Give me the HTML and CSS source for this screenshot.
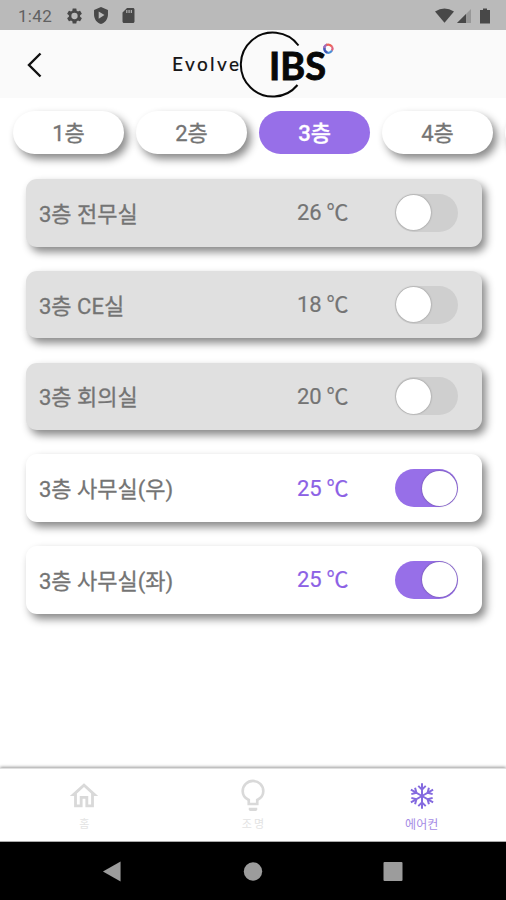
FILE: index.html
```html
<!DOCTYPE html>
<html lang="ko">
<head>
<meta charset="utf-8">
<meta name="viewport" content="width=device-width, initial-scale=1">
<title>Evolve IBS</title>
<link rel="stylesheet" href="styles.css">
</head>
<body>
<div class="phone">
  <div class="status">
    <span class="clock">1:42</span>
    <svg class="ic gear" viewBox="2 2 20 20"><path fill-rule="evenodd" d="M19.43 12.98c.04-.32.07-.64.07-.98s-.03-.66-.07-.98l2.11-1.65c.19-.15.24-.42.12-.64l-2-3.46c-.12-.22-.39-.3-.61-.22l-2.49 1c-.52-.4-1.08-.73-1.69-.98l-.38-2.65C14.46 2.18 14.25 2 14 2h-4c-.25 0-.46.18-.49.42l-.38 2.65c-.61.25-1.17.59-1.69.98l-2.49-1c-.23-.09-.49 0-.61.22l-2 3.46c-.13.22-.07.49.12.64l2.11 1.65c-.04.32-.07.65-.07.98s.03.66.07.98l-2.11 1.65c-.19.15-.24.42-.12.64l2 3.46c.12.22.39.3.61.22l2.49-1c.52.4 1.08.73 1.69.98l.38 2.65c.03.24.24.42.49.42h4c.25 0 .46-.18.49-.42l.38-2.65c.61-.25 1.17-.59 1.69-.98l2.49 1c.23.09.49 0 .61-.22l2-3.46c.12-.22.07-.49-.12-.64zM12 16.2a4.2 4.2 0 1 1 0-8.4 4.2 4.2 0 0 1 0 8.4z"/></svg>
    <svg class="ic shield" viewBox="3 1 18 22"><path fill-rule="evenodd" d="M12 1 3 5v6c0 5.55 3.84 10.74 9 12 5.16-1.26 9-6.45 9-12V5zM9 6.8v9.4l7.5-4.7z"/></svg>
    <svg class="ic card-ic" viewBox="4 2 16 20"><path fill-rule="evenodd" d="M18 2h-8L4 8v12c0 1.100.9 2 2 2h12c1.100 0 2-.9 2-2V4c0-1.100-.9-2-2-2zM9 8.500h1.500V4.500H9zM12 8.500h1.500V4.500H12zM15 8.500h1.500V4.500H15z"/></svg>
    <svg class="ic wifi" viewBox="0 0 20 15"><path d="M0 3.200Q10-3.200 20 3.200L10 15z"/></svg>
    <svg class="ic signal" viewBox="0 0 14 14"><path d="M14 0v14H0z" opacity=".3"/><path d="M9 5v9H0z"/></svg>
    <svg class="ic battery" viewBox="0 0 10 15"><path d="M3 0h4v1.500h3V15H0V1.500h3z"/></svg>
  </div>
  <header class="header">
    <svg class="back" viewBox="0 0 16 26"><path d="M13.500 1.500 2 13l11.500 11.500"/></svg>
    <svg class="logo" viewBox="0 0 170 68">
      <text class="evolve" x="2" y="40.500" textLength="67">Evolve</text>
      <path class="ring" d="M128.500 15.500A32 32 0 1 0 127.500 55"/>
      <text class="ibs" x="99" y="49.500" textLength="57" lengthAdjust="spacingAndGlyphs">IBS</text>
      <g class="dot">
        <path stroke="#5275cf" d="M154.800 19.500l-.6-3.200"/>
        <path stroke="#a46bb9" d="M154.200 18.500q0-3.200 3-3.900"/>
        <path stroke="#ec6258" d="M156.500 14.900q3.400-1.300 5.500 1.800"/>
        <path stroke="#df627f" d="M162 16.500q1.300 2.200-.2 4.200"/>
        <path stroke="#4b8fd6" d="M162 20.500q-2 3.200-5 2"/>
        <path stroke="#4058b5" d="M157.500 22.700q-3.300-1.200-3.200-4.500"/>
      </g>
    </svg>
  </header>
  <nav class="tabs">
    <div class="tab">1층</div>
    <div class="tab">2층</div>
    <div class="tab active">3층</div>
    <div class="tab">4층</div>
    <div class="tab"></div>
  </nav>
  <main class="rooms">
    <div class="room"><span class="name">3층 전무실</span><span class="temp">26 ℃</span><span class="switch"></span></div>
    <div class="room"><span class="name">3층 CE실</span><span class="temp">18 ℃</span><span class="switch"></span></div>
    <div class="room"><span class="name">3층 회의실</span><span class="temp">20 ℃</span><span class="switch"></span></div>
    <div class="room on"><span class="name">3층 사무실(우)</span><span class="temp">25 ℃</span><span class="switch"></span></div>
    <div class="room on"><span class="name">3층 사무실(좌)</span><span class="temp">25 ℃</span><span class="switch"></span></div>
  </main>
  <nav class="bottom">
    <div class="item">
      <svg viewBox="0 0 24 24"><path d="M12 5.690l5 4.500V18h-2v-6H9v6H7v-7.810l5-4.500M12 3 2 12h3v8h6v-6h2v6h6v-8h3L12 3z"/></svg>
      <span>홈</span>
    </div>
    <div class="item">
      <svg class="bulb" viewBox="0 0 24 32"><path class="line" d="M8 23.500v-3.800C4.500 18 2.300 15.200 2.300 11.500a9.700 9.700 0 0 1 19.400 0c0 3.700-2.200 6.500-5.700 8.200v3.800z"/><path d="M8 27h8v1.500q0 1.500-1.500 1.500h-5Q8 30 8 28.500z"/></svg>
      <span class="wide">조명</span>
    </div>
    <div class="item selected">
      <svg viewBox="0 0 24 24"><g class="flake"><path id="arm" d="M12 12V1M8.800 3.300 12 6.500l3.200-3.200"/><use href="#arm" transform="rotate(60 12 12)"/><use href="#arm" transform="rotate(120 12 12)"/><use href="#arm" transform="rotate(180 12 12)"/><use href="#arm" transform="rotate(240 12 12)"/><use href="#arm" transform="rotate(300 12 12)"/></g></svg>
      <span>에어컨</span>
    </div>
  </nav>
  <div class="system">
    <svg viewBox="0 0 20 22"><path d="M19 .5v21L.5 11z"/></svg>
    <svg viewBox="0 0 20 20"><circle cx="10" cy="10" r="9.200"/></svg>
    <svg viewBox="0 0 20 20"><rect x=".5" y=".5" width="19" height="19" rx="1"/></svg>
  </div>
</div>
</body>
</html>
```
FILE: styles.css
```css
* { box-sizing: border-box; }
body {
  margin: 0;
  background: #fff;
  font-family: Roboto, "Noto Sans CJK KR", sans-serif;
  color: #747474;
}
.phone {
  width: 506px;
  height: 900px;
  display: flex;
  flex-direction: column;
  overflow: hidden;
}
.status {
  height: 30px;
  flex: none;
  background: #bababa;
  display: flex;
  align-items: center;
  padding: 1px 16px 0 18px;
}
.clock { width: 49px; font-size: 17px; color: #616161; letter-spacing: .3px; }
.ic { fill: #484848; flex: none; }
.gear { width: 15px; height: 16px; }
.shield { width: 14px; height: 17px; margin-left: 12px; }
.card-ic { width: 13px; height: 15px; margin-left: 14px; }
.wifi { width: 19px; height: 15px; margin-left: auto; }
.signal { width: 14px; height: 14px; margin-left: 3px; }
.battery { width: 10px; height: 16px; margin-left: 9px; }
.header {
  height: 68px;
  flex: none;
  background: #fafafa;
  display: flex;
  align-items: center;
  padding-left: 27px;
}
.back { width: 16px; height: 26px; margin-top: 1px; fill: none; stroke: #111; stroke-width: 2.4; }
.logo { width: 170px; height: 68px; margin-left: 127px; }
.evolve { font: 500 19px Lato, sans-serif; fill: #171717; stroke: #171717; stroke-width: .1; }
.ibs { font: 700 38px Lato, sans-serif; fill: #080808; stroke: #080808; stroke-width: .9; }
.ring { fill: none; stroke: #080808; stroke-width: 2; }
.dot { fill: none; stroke-width: 2.2; }
.tabs {
  flex: none;
  display: flex;
  gap: 12px;
  padding: 13px 0 0 13px;
  height: 81px;
}
.tab {
  flex: none;
  width: 111px;
  height: 43px;
  border-radius: 22px;
  background: #fff;
  box-shadow: 4px 5px 8px rgba(0, 0, 0, .47);
  display: flex;
  align-items: center;
  justify-content: center;
  font-size: 22px;
  font-weight: 400;
  -webkit-text-stroke: .3px;
  line-height: 43px;
  padding-top: 2px;
}
.tab.active { background: #976fe8; color: #fff; box-shadow: none; font-weight: 500; }
.rooms {
  flex: 1;
  padding: 0 24px 0 26px;
  display: flex;
  flex-direction: column;
  gap: 24.300px;
}
.room {
  height: 67.500px;
  flex: none;
  border-radius: 11px;
  background: #e0e0e0;
  box-shadow: 4px 5px 8px rgba(0, 0, 0, .47);
  display: grid;
  grid-template-columns: 258px 98px 63px;
  align-items: center;
  padding-left: 13px;
  font-size: 22px;
}
.name { font-weight: 400; -webkit-text-stroke: .3px; padding-bottom: 2px; }
.temp { font-weight: 400; -webkit-text-stroke: .2px; letter-spacing: -.2px; padding-bottom: 5px; }
.room.on { background: #fff; }
.room.on .temp { color: #8c61e5; }
.switch {
  height: 38px;
  border-radius: 19px;
  background: #cfcfcf;
  display: flex;
  align-items: center;
  padding: 0 1px;
}
.switch::before {
  content: "";
  width: 35px;
  height: 35px;
  border-radius: 50%;
  background: #fff;
  box-shadow: 0 0 2px rgba(0, 0, 0, .4);
}
.room.on .switch { background: #976fe8; justify-content: flex-end; }
.bottom {
  height: 74px;
  flex: none;
  background: #fff;
  border-top: 1px solid #e0e0e0;
  border-bottom: 1px solid #aaa;
  box-shadow: 0 -1px 3px rgba(0, 0, 0, .4);
  display: grid;
  grid-template-columns: repeat(3, 1fr);
}
.item {
  display: flex;
  flex-direction: column;
  align-items: center;
  padding-top: 10px;
  font-size: 11px;
  line-height: 16px;
  color: #e3e3e3;
}
.item svg { width: 34px; height: 34px; fill: #d9d9d9; }
.item span { margin-top: 4px; }
.item .wide { letter-spacing: 2px; margin-right: -2px; }
.bulb .line { fill: none; stroke: #d9d9d9; stroke-width: 2.500; }
.selected { color: #a58be5; font-size: 12px; }
.item.selected svg { width: 28px; height: 28px; margin: 3px 0; }
.flake { fill: none; stroke: #846adf; stroke-width: 1.700; }
.system {
  height: 58px;
  flex: none;
  background: #000;
  display: flex;
  align-items: center;
  justify-content: space-between;
  padding: 0 103px 0 102px;
}
.system svg { width: 20px; height: 21px; fill: #9c9c9c; }
```
